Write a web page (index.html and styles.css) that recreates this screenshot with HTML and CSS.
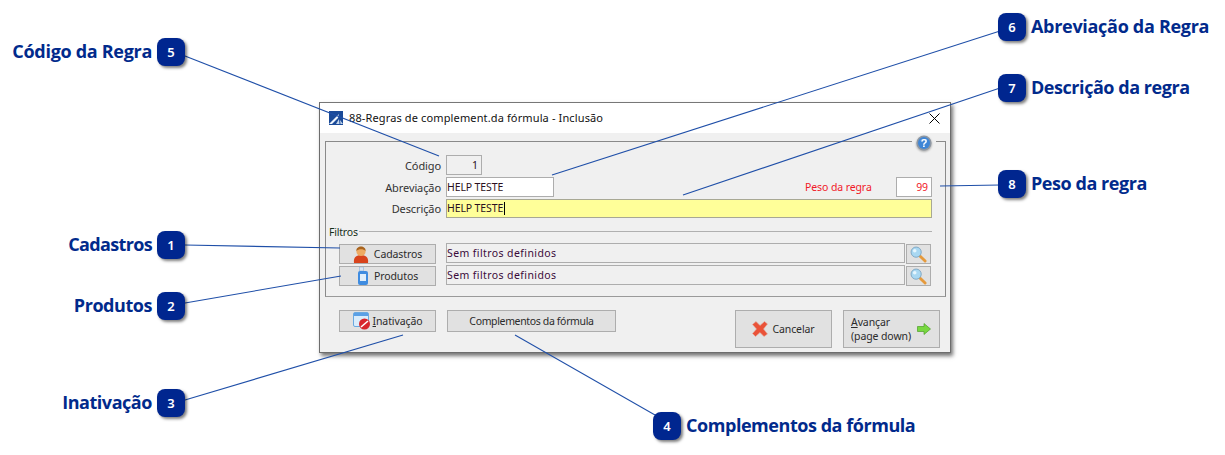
FILE: index.html
```html
<!DOCTYPE html>
<html lang="pt">
<head>
<meta charset="utf-8">
<title>Regras de complemento da fórmula</title>
<link rel="stylesheet" href="styles.css">
</head>
<body>
<div class="canvas">
  <section class="dialog">
    <header class="titlebar">
      <svg class="appicon" viewBox="0 0 14 14"><rect width="14" height="14" fill="#1a4a98"/><path d="M0 13 L7 6 L10 3 L9 7 L3 13 Z" fill="#eef4fb"/><path d="M7 13 L10 8 L10.5 13 Z M11 9 L14 13 L11.5 13 Z" fill="#c4d6ec"/></svg>
      <span class="titletext">88-Regras de complement.da fórmula - Inclusão</span>
      <svg class="close" viewBox="0 0 11 11"><path d="M0.5 0.5 L10.5 10.5 M10.5 0.5 L0.5 10.5" stroke="#000" stroke-width="1" fill="none"/></svg>
    </header>
    <div class="body">
      <div class="group">
        <span class="helpwrap"><svg class="help" viewBox="0 0 16 16"><circle cx="8" cy="8" r="7.6" fill="#8d97a3"/><circle cx="8" cy="8" r="6" fill="#3f86d6"/><path d="M4 6 A4.6 4 0 0 1 12 6 A8 8 0 0 0 4 6Z" fill="#a9cdf2"/><text x="8" y="11.6" text-anchor="middle" class="helpq">?</text></svg></span>
        <div class="row row-codigo">
          <label class="lbl">Código</label>
          <div class="field f-code">1</div>
        </div>
        <div class="row row-abrev">
          <label class="lbl">Abreviação</label>
          <div class="field f-abrev">HELP TESTE</div>
          <span class="peso">Peso da regra</span>
          <div class="field f-peso">99</div>
        </div>
        <div class="row row-desc">
          <label class="lbl">Descrição</label>
          <div class="field f-desc">HELP TESTE<i class="caret"></i></div>
        </div>
        <div class="legend"><span>Filtros</span><b class="rule"></b></div>
        <div class="filter filter-a">
          <button class="btn b-filter">
            <svg class="ic" viewBox="0 0 16 18"><path d="M1 18 C0 12 4 10 8 10 C12 10 16 12 15 18Z" fill="#d8431c"/><circle cx="8" cy="6.5" r="4.6" fill="#eeaa62"/><path d="M3.4 6 C3 0 13 0 12.6 6 C10.5 3.6 5.5 3.6 3.4 6Z" fill="#a8641f"/></svg>
            <span>Cadastros</span>
          </button>
          <div class="field f-filter">Sem filtros definidos</div>
          <button class="btn b-search"><svg class="ic-s" viewBox="0 0 18 18"><path d="M10.5 10.5 L16 16" stroke="#e59a3c" stroke-width="3" stroke-linecap="round"/><circle cx="6.5" cy="6.5" r="5.4" fill="#a9d8f2" stroke="#7da6c2"/><circle cx="5" cy="5" r="1.9" fill="#e6f6fe"/></svg></button>
        </div>
        <div class="filter">
          <button class="btn b-filter">
            <svg class="ic ic-bottle" viewBox="0 0 12 18"><rect x="2.5" y="0" width="4" height="4" fill="#d8e6f5" stroke="#8fb2d8" stroke-width=".6"/><path d="M1 6 Q1 4 3 4 H9 Q11 4 11 6 V16 Q11 18 9 18 H3 Q1 18 1 16Z" fill="#3f8ce0"/><rect x="3" y="7" width="6" height="7" fill="#dfeefb"/></svg>
            <span>Produtos</span>
          </button>
          <div class="field f-filter">Sem filtros definidos</div>
          <button class="btn b-search"><svg class="ic-s" viewBox="0 0 18 18"><path d="M10.5 10.5 L16 16" stroke="#e59a3c" stroke-width="3" stroke-linecap="round"/><circle cx="6.5" cy="6.5" r="5.4" fill="#a9d8f2" stroke="#7da6c2"/><circle cx="5" cy="5" r="1.9" fill="#e6f6fe"/></svg></button>
        </div>
      </div>
      <div class="actions">
        <button class="btn b-inativ">
          <svg class="ic-cal" viewBox="0 0 18 18"><rect x="0.5" y="0.5" width="15" height="14" rx="1.5" fill="#d9ecfb" stroke="#6aa9e0"/><rect x="1" y="1" width="14" height="3" fill="#5aa0e6"/><circle cx="11.5" cy="12" r="5.5" fill="#d8262c"/><path d="M8 15 L15 9" stroke="#fff" stroke-width="1.6"/></svg>
          <span><u>I</u>nativação</span>
        </button>
        <button class="btn b-compl">Complementos da fórmula</button>
        <span class="spacer"></span>
        <button class="btn b-cancel">
          <svg class="ic-x" viewBox="0 0 16 16"><path d="M0.5 3.5 L4 0.5 L8 4.5 L12.5 0.5 L15.5 3 L11.5 8 L15.5 13 L12 15.5 L8 11.5 L3.5 15.5 L0.5 12.5 L4.5 8Z" fill="#ea5238" stroke="#e0a898" stroke-width=".6"/></svg>
          <span>Cancelar</span>
        </button>
        <button class="btn b-next">
          <span class="next-text"><u>A</u>vançar<br>(page down)</span>
          <svg class="ic-arrow" viewBox="0 0 14 12"><path d="M0.5 3.5 H7 V0.5 L13.5 6 L7 11.5 V8.5 H0.5Z" fill="#78d840" stroke="#4d9c2a" stroke-width=".7"/></svg>
        </button>
      </div>
    </div>
  </section>

  <svg class="wires" viewBox="0 0 1225 455">
    <g stroke="#1f4fa8" stroke-width="1.1" fill="none">
      <path d="M185 56 L439 156"/>
      <path d="M1000 31 L552 175"/>
      <path d="M1000 88 L683 195"/>
      <path d="M1000 185 L940 186"/>
      <path d="M185 245 L340 248"/>
      <path d="M185 303 L341 276"/>
      <path d="M185 400 L403 335"/>
      <path d="M655 415 L515 335"/>
    </g>
  </svg>

  <div class="callout left c1"><span class="cap cap-tight">Cadastros</span><span class="badge">1</span></div>
  <div class="callout left c2"><span class="cap">Produtos</span><span class="badge">2</span></div>
  <div class="callout left c3"><span class="cap">Inativação</span><span class="badge">3</span></div>
  <div class="callout c4"><span class="badge">4</span><span class="cap">Complementos da fórmula</span></div>
  <div class="callout left c5"><span class="cap cap-wide">Código da Regra</span><span class="badge">5</span></div>
  <div class="callout c6"><span class="badge">6</span><span class="cap cap-wide">Abreviação da Regra</span></div>
  <div class="callout c7"><span class="badge">7</span><span class="cap">Descrição da regra</span></div>
  <div class="callout c8"><span class="badge">8</span><span class="cap">Peso da regra</span></div>
</div>
</body>
</html>
```

FILE: styles.css
```css
* { box-sizing: border-box; }
html, body { margin: 0; padding: 0; background: #fff; }
.canvas { position: relative; width: 1225px; height: 455px; overflow: hidden; font-family: "Noto Sans", "Open Sans", sans-serif; }

/* dialog window */
.dialog {
  position: absolute; left: 319px; top: 102px; width: 632px; height: 251px;
  background: #f0f0f0; border: 1px solid #6d6d6d; border-top-color: #777;
  box-shadow: 2px 3px 4px rgba(0,0,0,.55);
  display: flex; flex-direction: column;
  font-family: "DejaVu Sans", sans-serif; font-size: 10px; color: #2b2b2b;
}
.titlebar { height: 30px; flex: none; background: #fff; display: flex; align-items: center; padding: 0 10px 2px 9px; }
.appicon { width: 14px; height: 14px; margin-right: 6px; margin-top: 2px; }
.titletext { flex: 1; font-size: 11px; letter-spacing: .13px; color: #111; font-family: "Noto Sans", sans-serif; }
.close { width: 11px; height: 11px; margin-top: 2px; }
.body { flex: 1; padding: 8px 4px 0 5px; display: flex; flex-direction: column; }
.group { position: relative; height: 156px; border: 1px solid #8a8a8a; border-bottom-color: #9a9a9a; padding: 13px 13px 0 13px; }
.helpwrap { position: absolute; right: 9px; top: -7px; width: 24px; height: 17px; background: #f0f0f0; display: flex; justify-content: center; }
.help { width: 16px; height: 16px; filter: drop-shadow(0 1px 1px rgba(0,0,0,.35)); }
.helpq { font: bold 11px "Liberation Sans", sans-serif; fill: #fff; }

.row { display: flex; align-items: center; height: 20px; margin-bottom: 2px; }
.row-desc { height: 19px; margin-bottom: 0; }
.lbl { width: 102px; margin-right: 5px; text-align: right; font-family: "Noto Sans", sans-serif; font-size: 11px; letter-spacing: -.1px; color: #333; }
.field { border: 1px solid #adadad; height: 100%; display: flex; align-items: center; padding: 0 0 1px 0; font-family: "Noto Sans", sans-serif; font-size: 10.5px; letter-spacing: -.12px; color: #2a1020; background: #f0f0f0; white-space: nowrap; }
.f-code { width: 36px; justify-content: flex-end; padding-right: 3px; }
.f-abrev { width: 108px; background: #fff; }
.f-desc { width: 486px; background: #ffff99; border-color: #a8a894; }
.caret { display: inline-block; width: 1px; height: 13px; background: #000; margin-left: 1px; }
.peso { margin-left: 251px; width: 91px; color: #f01928; font-family: "Noto Sans", sans-serif; font-size: 10.5px; letter-spacing: -.1px; }
.f-peso { width: 36px; background: #fff; justify-content: flex-end; padding-right: 3px; color: #f01928; }

.legend { display: flex; align-items: center; height: 14px; margin-top: 7px; margin-left: -10px; font-family: "Noto Sans", sans-serif; font-size: 10.5px; letter-spacing: -.2px; color: #16301a; }
.rule { flex: 1; height: 1px; background: #b0b0b0; margin-left: 1px; margin-top: -1px; }

.filter { display: flex; align-items: flex-start; height: 22px; }
.filter-a { margin-top: 4px; }
.btn { border: 1px solid #adadad; background: #e1e1e1; padding: 0; display: flex; align-items: center; justify-content: center; font-family: "Noto Sans", sans-serif; font-size: 10.5px; letter-spacing: -.1px; color: #2b2b2b; }
.b-filter { width: 97px; height: 20px; margin-top: 1px; gap: 5px; }
.f-filter { width: 459px; height: 20px; margin-left: 10px; color: #3a0a3a; padding-bottom: 0; letter-spacing: .4px; }
.b-search { width: 25px; height: 20px; margin-top: 1px; margin-left: 1px; }
.ic { width: 16px; height: 18px; }
.ic-bottle { width: 12px; }
.ic-s { width: 17px; height: 17px; }

.actions { display: flex; align-items: flex-start; padding: 13px 6px 0 14px; }
.b-inativ { width: 97px; height: 22px; gap: 2px; }
.ic-cal { width: 18px; height: 18px; }
.b-compl { width: 169px; height: 22px; margin-left: 11px; letter-spacing: -.35px; }
.spacer { flex: 1; }
.b-cancel { width: 97px; height: 38px; gap: 4px; }
.ic-x { width: 16px; height: 16px; }
.b-next { width: 97px; height: 38px; margin-left: 11px; justify-content: flex-start; padding-left: 7px; gap: 6px; }
.next-text { text-align: left; line-height: 14px; white-space: nowrap; }
.ic-arrow { width: 14px; height: 12px; }

/* annotation layer */
.wires { position: absolute; left: 0; top: 0; width: 1225px; height: 455px; pointer-events: none; }
.callout { position: absolute; display: flex; align-items: center; gap: 5px; height: 28px; }
.callout.left { right: 1040px; }
.cap { font-family: "Open Sans", sans-serif; font-weight: 700; font-size: 18px; letter-spacing: -.45px; color: #012a8c; white-space: nowrap; margin-top: -2px; }
.cap-wide { letter-spacing: -.3px; }
.cap-tight { letter-spacing: -.65px; }
.badge { flex: none; width: 28px; height: 28px; border-radius: 8px; background: #00268f; color: #fff; font-family: "Noto Sans", sans-serif; font-weight: 600; font-size: 13px; display: flex; align-items: center; justify-content: center; box-shadow: 2px 2px 3px rgba(0,0,0,.5); }
.c1 { top: 231px; }
.c2 { top: 292px; }
.c3 { top: 389px; }
.c4 { left: 653px; top: 412px; }
.c5 { top: 38px; }
.c6 { left: 998px; top: 13px; }
.c7 { left: 998px; top: 74px; }
.c8 { left: 998px; top: 170px; }
```
